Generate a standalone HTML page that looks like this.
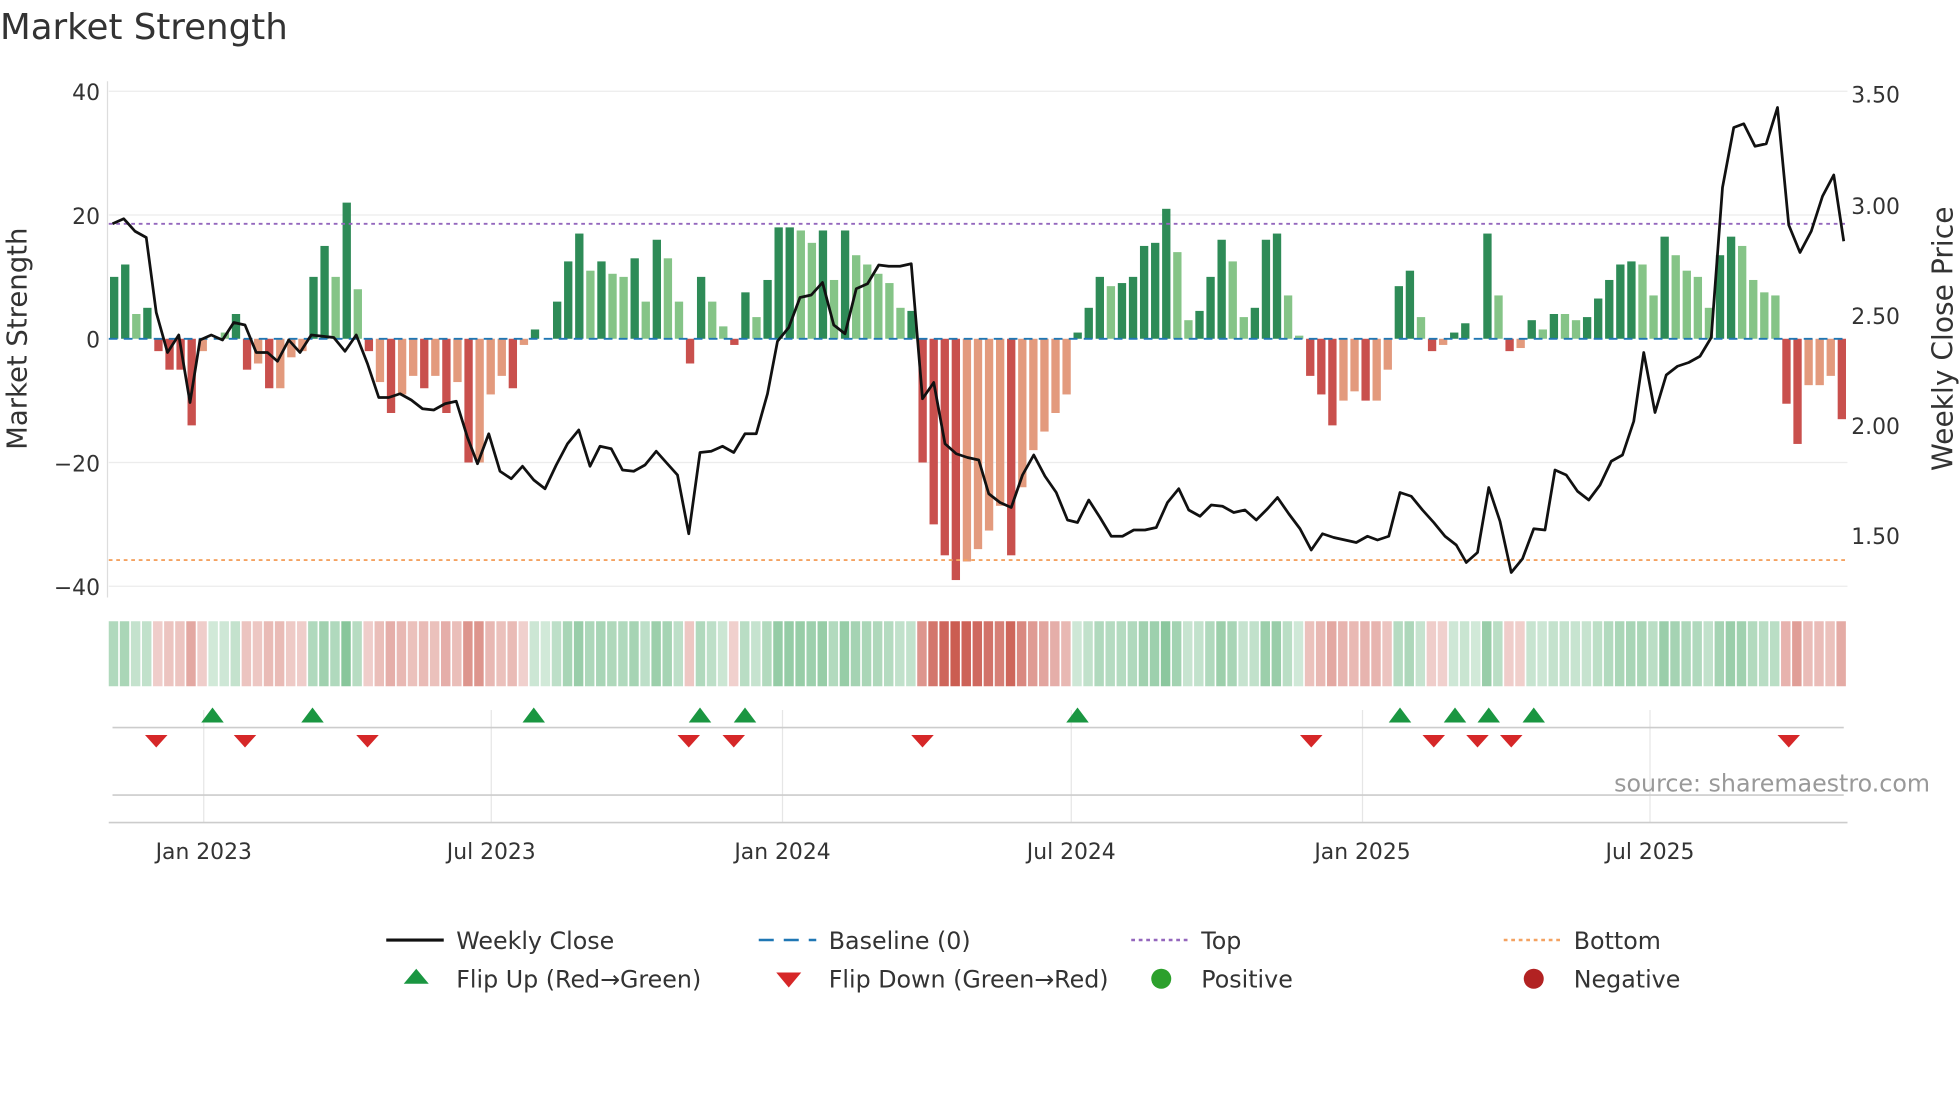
<!DOCTYPE html>
<html><head><meta charset="utf-8"><style>
html,body{margin:0;padding:0;background:#fff;width:1960px;height:1102px;overflow:hidden}
svg{display:block;font-family:"DejaVu Sans","Liberation Sans",sans-serif}
</style></head><body>
<svg id="s" width="1960" height="1102" viewBox="0 0 1568 881.6" xmlns="http://www.w3.org/2000/svg">
<text x="0" y="31" font-size="28.5" fill="#333">Market Strength</text>
<g stroke="#ececec" stroke-width="1">
<line x1="87" x2="1478" y1="73" y2="73"/><line x1="87" x2="1478" y1="172" y2="172"/>
<line x1="87" x2="1478" y1="370" y2="370"/><line x1="87" x2="1478" y1="469" y2="469"/>
</g>
<line x1="86" x2="86" y1="65" y2="478" stroke="#ddd"/>
<g font-size="17.5" fill="#333" text-anchor="end">
<text x="80" y="80">40</text><text x="80" y="179">20</text><text x="80" y="278">0</text>
<text x="80" y="377">−20</text><text x="80" y="476">−40</text>
</g>
<g font-size="17.5" fill="#333">
<text x="1481" y="82">3.50</text><text x="1481" y="171">3.00</text><text x="1481" y="259">2.50</text>
<text x="1481" y="347">2.00</text><text x="1481" y="435">1.50</text>
</g>
<text transform="translate(21,271) rotate(-90)" font-size="22" fill="#333" text-anchor="middle">Market Strength</text>
<text transform="translate(1562,271) rotate(-90)" font-size="22.5" fill="#333" text-anchor="middle">Weekly Close Price</text>
<g id="bars"></g>
<line x1="87" x2="1478" y1="271" y2="271" stroke="#1f77b4" stroke-width="1.5" stroke-dasharray="7,5"/>
<line x1="87" x2="1478" y1="179" y2="179" stroke="#9467bd" stroke-width="1.5" stroke-dasharray="3,3"/>
<line x1="87" x2="1478" y1="448" y2="448" stroke="#f4a261" stroke-width="1.5" stroke-dasharray="3,3"/>
<polyline id="price" fill="none" stroke="#111" stroke-width="2.2" stroke-linejoin="round"/>
<g id="strip"></g>
<g stroke="#e6e6e6"><line x1="163" x2="163" y1="568" y2="658"/><line x1="393" x2="393" y1="568" y2="658"/><line x1="626" x2="626" y1="568" y2="658"/><line x1="857" x2="857" y1="568" y2="658"/><line x1="1090" x2="1090" y1="568" y2="658"/><line x1="1320" x2="1320" y1="568" y2="658"/></g>
<line x1="90" x2="1475" y1="582" y2="582" stroke="#ccc" stroke-width="1.3"/>
<line x1="90" x2="1475" y1="636" y2="636" stroke="#ccc" stroke-width="1.3"/>
<line x1="87" x2="1478" y1="658" y2="658" stroke="#ccc" stroke-width="1.3"/>
<g id="mk"></g>
<text x="1544" y="633" font-size="19" fill="#999" text-anchor="end">source: sharemaestro.com</text>
<g font-size="17.5" fill="#333" text-anchor="middle">
<text x="163" y="687">Jan 2023</text><text x="393" y="687">Jul 2023</text><text x="626" y="687">Jan 2024</text>
<text x="857" y="687">Jul 2024</text><text x="1090" y="687">Jan 2025</text><text x="1320" y="687">Jul 2025</text>
</g>
<g font-size="19" fill="#333">
<line x1="309" x2="355" y1="752" y2="752" stroke="#111" stroke-width="2.5"/><text x="365" y="759">Weekly Close</text>
<line x1="607" x2="653" y1="752" y2="752" stroke="#1f77b4" stroke-width="2" stroke-dasharray="12,8"/><text x="663" y="759">Baseline (0)</text>
<line x1="905" x2="951" y1="752" y2="752" stroke="#9467bd" stroke-width="2" stroke-dasharray="3,3"/><text x="961" y="759">Top</text>
<line x1="1203" x2="1249" y1="752" y2="752" stroke="#f4a261" stroke-width="2" stroke-dasharray="3,3"/><text x="1259" y="759">Bottom</text>
<polygon points="323,787 333,775 343,787" fill="#1a9641"/><text x="365" y="790">Flip Up (Red→Green)</text>
<polygon points="621,778 641,778 631,790" fill="#d62728"/><text x="663" y="790">Flip Down (Green→Red)</text>
<circle cx="929" cy="783" r="8" fill="#2ca02c"/><text x="961" y="790">Positive</text>
<circle cx="1227" cy="783" r="8" fill="#b22222"/><text x="1259" y="790">Negative</text>
</g>
</svg>
<script>
var B="10d 12d 4l 5d -2D -5D -5D -14D -2L 0l 1l 4d -5D -4L -8D -8L -3L -2L 10d 15d 10l 22d 8l -2D -7L -12D -9L -6L -8D -6L -12D -7L -20D -20L -9L -6L -8D -1L 1.5d 0l 6d 12.5d 17d 11l 12.5d 10.5l 10l 13d 6l 16d 13l 6l -4D 10d 6l 2l -1D 7.5d 3.5l 9.5d 18d 18d 17.5l 15.5l 17.5d 9.5l 17.5d 13.5l 12l 10.5l 9l 5l 4.5d -20D -30D -35D -39D -36L -34L -31L -27L -35D -24L -18L -15L -12L -9L 1d 5d 10d 8.5l 9d 10d 15d 15.5d 21d 14l 3l 4.5d 10d 16d 12.5l 3.5l 5d 16d 17d 7l 0.5l -6D -9D -14D -10L -8.5L -10D -10L -5L 8.5d 11d 3.5l -2D -1L 1d 2.5d 0l 17d 7l -2D -1.5L 3d 1.5l 4d 4l 3l 3.5d 6.5d 9.5d 12d 12.5d 12l 7l 16.5d 13.5l 11l 10l 5l 13.5d 16.5d 15l 9.5l 7.5l 7l -10.5D -17D -7.5L -7.5L -6L -13D".split(" ");
var col={d:"#2e8b57",l:"#85c487",D:"#c9504d",L:"#e39a7d"};
var ns="http://www.w3.org/2000/svg",bars=document.getElementById("bars"),strip=document.getElementById("strip");
var n=B.length,x0=87,step=(1478-87)/n;
function el(t,a,p){var e=document.createElementNS(ns,t);for(var k in a)e.setAttribute(k,a[k]);p.appendChild(e);return e;}
B.forEach(function(s,i){var v=parseFloat(s),c=s.slice(-1),x=x0+i*step+1,w=step-2.2,h=Math.abs(v)*4.95;
 el("rect",{x:x,y:v>=0?271-h:271,width:w,height:h,fill:col[c]},bars);
 var a=0.22+0.6*Math.min(Math.abs(v)/38,1);
 el("rect",{x:x0+i*step,y:497,width:step-1.3,height:52,fill:v>=0?"#2e9a4f":"#c0392b","fill-opacity":a},strip);});
var P=[[90,179],[99,175],[108,185],[117,190],[125,250],[134,282],[143,268],[152,322],[160,272],[169,268],[178,272],[187,258],[196,260],[205,282],[214,282],[222,289],[231,272],[240,282],[249,268],[258,269],[267,270],[276,281],[285,268],[294,291],[303,318],[311,318],[320,315],[329,320],[338,327],[347,328],[356,323],[365,321],[374,350],[382,371],[391,347],[400,377],[409,383],[418,373],[427,384],[436,391],[445,372],[454,355],[463,344],[472,373],[480,357],[489,359],[498,376],[507,377],[516,372],[525,361],[533,370],[542,380],[551,427],[560,362],[569,361],[578,357],[587,362],[596,347],[605,347],[614,315],[622,273],[631,262],[640,238],[649,236],[658,226],[667,260],[676,267],[685,231],[694,227],[703,212],[711,213],[720,213],[729,211],[738,319],[747,306],[756,355],[765,363],[774,366],[783,368],[791,395],[800,402],[809,406],[818,380],[827,364],[836,381],[845,394],[854,416],[862,418],[871,400],[880,414],[889,429],[898,429],[907,424],[916,424],[925,422],[934,402],[943,391],[951,408],[960,413],[969,404],[978,405],[987,410],[996,408],[1005,416],[1014,407],[1022,398],[1031,411],[1040,423],[1049,440],[1058,427],[1067,430],[1076,432],[1085,434],[1094,429],[1102,432],[1111,429],[1120,394],[1129,397],[1138,408],[1147,418],[1156,429],[1165,436],[1173,450],[1182,442],[1191,390],[1200,417],[1209,458],[1218,447],[1227,423],[1236,424],[1244,376],[1253,380],[1262,393],[1271,400],[1280,388],[1289,369],[1298,364],[1307,337],[1315,282],[1324,330],[1333,300],[1342,293],[1351,290],[1360,285],[1369,270],[1378,150],[1387,102],[1395,99],[1404,117],[1413,115],[1422,86],[1431,180],[1440,202],[1449,185],[1458,157],[1467,140],[1475,193]];
document.getElementById("price").setAttribute("points",P.map(function(p){return p.join(",")}).join(" "));
var mk=document.getElementById("mk");
[170,250,427,560,596,862,1120,1164,1191,1227].forEach(function(x){el("polygon",{points:(x-9)+",578 "+x+",566 "+(x+9)+",578",fill:"#1a9641"},mk);});
[125,196,294,551,587,738,1049,1147,1182,1209,1431].forEach(function(x){el("polygon",{points:(x-9)+",588 "+(x+9)+",588 "+x+",598",fill:"#d62728"},mk);});
</script>
</body></html>
